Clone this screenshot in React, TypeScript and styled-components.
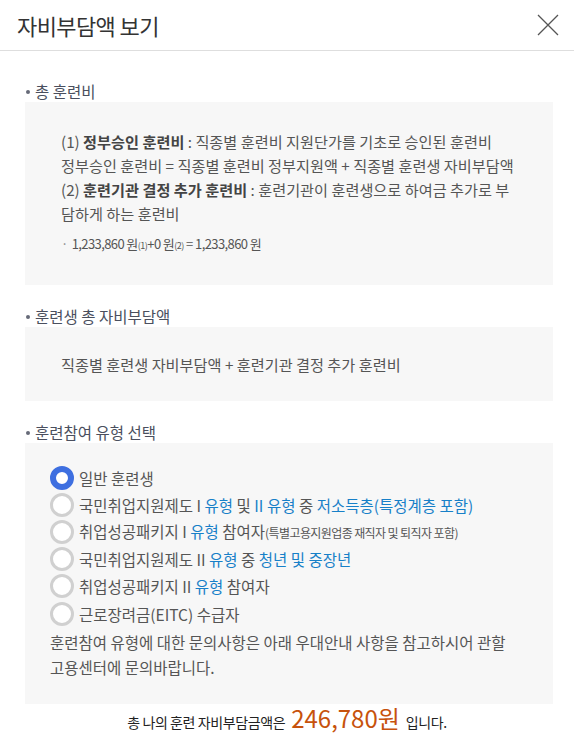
import React, { useState } from "react";
import styled, { createGlobalStyle } from "styled-components";

const Global = createGlobalStyle`
  html, body { margin: 0; padding: 0; background: #fff; }
  body { font-family: "Noto Sans CJK KR", "Noto Sans", sans-serif; color: #444; }
  * { box-sizing: border-box; }
`;

const Modal = styled.div`
  width: 574px;
  background: #fff;
`;

const Header = styled.div`
  height: 51px;
  border-bottom: 1px solid #dedede;
  display: flex;
  align-items: center;
  justify-content: space-between;
  padding: 0 12px 0 17px;
`;

const Title = styled.h1`
  margin: 0;
  font-size: 22px;
  font-weight: 400;
  color: #333;
  letter-spacing: -0.6px;
`;

const Close = styled.button`
  width: 28px;
  height: 28px;
  border: 0;
  background: none;
  padding: 0;
  display: flex;
  align-items: center;
  justify-content: center;
  cursor: pointer;
`;

const Body = styled.div`
  padding: 30px 21px 0 25px;
`;

const SectionTitle = styled.h2`
  margin: 0;
  font-size: 15.5px;
  font-weight: 400;
  line-height: 21px;
  color: #4a4f5e;
  display: flex;
  align-items: center;
  gap: 5px;
  &::before {
    content: "";
    width: 4px;
    height: 4px;
    border-radius: 50%;
    background: #666a78;
    margin-left: 1px;
  }
`;

const Section = styled.section<{ $gap?: number }>`
  margin-top: ${(p) => p.$gap ?? 0}px;
`;

const Box = styled.div<{ $pt: number; $pb: number }>`
  background: #f7f7f7;
  padding: ${(p) => p.$pt}px 30px ${(p) => p.$pb}px 36px;
  font-size: 15.2px;
  line-height: 24px;
  color: #555;
`;

const Line = styled.p`
  margin: 0;
`;

const Strong = styled.b`
  font-weight: 700;
  color: #444;
`;

const Sum = styled.p`
  margin: 7px 0 0;
  font-size: 13px;
  line-height: 24px;
  color: #555;
  letter-spacing: -0.6px;
  &::before {
    content: "·";
    margin-right: 4px;
    color: #888;
  }
`;

const Sub = styled.span`
  font-size: 9px;
  letter-spacing: -0.5px;
`;

const RadioList = styled.div`
  display: flex;
  flex-direction: column;
  margin-left: -11px;
`;

const RadioRow = styled.label`
  display: flex;
  align-items: center;
  gap: 5px;
  height: 27.2px;
  cursor: pointer;
  color: #555;
  font-size: 15.5px;
`;

const RadioCircle = styled.span<{ $on: boolean }>`
  width: 24px;
  height: 24px;
  border-radius: 50%;
  flex: none;
  background: #fff;
  border: ${(p) => (p.$on ? "6px solid #3e6fe0" : "3px solid #d0d0d0")};
`;

const Blue = styled.span`
  color: #1780c8;
`;

const Small = styled.span`
  font-size: 12px;
  letter-spacing: -0.6px;
`;

const Notice = styled.p`
  margin: 3px 0 0 -11px;
  font-size: 15.5px;
  line-height: 25px;
  color: #555;
`;

const Footer = styled.div`
  display: flex;
  justify-content: center;
  align-items: baseline;
  gap: 6px;
  padding: 0 0 20px;
  font-size: 14px;
  line-height: 28px;
  color: #222;
  letter-spacing: -0.4px;
`;

const Amount = styled.span`
  font-size: 24px;
  color: #c7520c;
  letter-spacing: 0;
`;

const options: React.ReactNode[] = [
  <>일반 훈련생</>,
  <>
    국민취업지원제도 I <Blue>유형</Blue> 및 <Blue>II 유형</Blue> 중 <Blue>저소득층(특정계층 포함)</Blue>
  </>,
  <>
    취업성공패키지 I <Blue>유형</Blue> 참여자<Small>(특별고용지원업종 재직자 및 퇴직자 포함)</Small>
  </>,
  <>
    국민취업지원제도 II <Blue>유형</Blue> 중 <Blue>청년 및 중장년</Blue>
  </>,
  <>
    취업성공패키지 II <Blue>유형</Blue> 참여자
  </>,
  <>근로장려금(EITC) 수급자</>,
];

export default function App() {
  const [sel, setSel] = useState(0);
  return (
    <>
      <Global />
      <Modal>
        <Header>
          <Title>자비부담액 보기</Title>
          <Close aria-label="닫기">
            <svg width="22" height="22" viewBox="0 0 22 22">
              <path d="M1 1 L21 21 M21 1 L1 21" stroke="#555" strokeWidth="1.3" fill="none" />
            </svg>
          </Close>
        </Header>
        <Body>
          <Section>
            <SectionTitle>총 훈련비</SectionTitle>
            <Box $pt={27} $pb={27}>
              <Line>
                (1) <Strong>정부승인 훈련비</Strong> : 직종별 훈련비 지원단가를 기초로 승인된 훈련비
              </Line>
              <Line>정부승인 훈련비 = 직종별 훈련비 정부지원액 + 직종별 훈련생 자비부담액</Line>
              <Line>
                (2) <Strong>훈련기관 결정 추가 훈련비</Strong> : 훈련기관이 훈련생으로 하여금 추가로 부담하게 하는 훈련비
              </Line>
              <Sum>
                1,233,860 원<Sub>(1)</Sub>+0 원<Sub>(2)</Sub> = 1,233,860 원
              </Sum>
            </Box>
          </Section>
          <Section $gap={21}>
            <SectionTitle>훈련생 총 자비부담액</SectionTitle>
            <Box $pt={25} $pb={25}>
              <Line>직종별 훈련생 자비부담액 + 훈련기관 결정 추가 훈련비</Line>
            </Box>
          </Section>
          <Section $gap={21}>
            <SectionTitle>훈련참여 유형 선택</SectionTitle>
            <Box $pt={21} $pb={24}>
              <RadioList>
                {options.map((o, i) => (
                  <RadioRow key={i} onClick={() => setSel(i)}>
                    <RadioCircle $on={sel === i} />
                    <span>{o}</span>
                  </RadioRow>
                ))}
              </RadioList>
              <Notice>
                훈련참여 유형에 대한 문의사항은 아래 우대안내 사항을 참고하시어 관할 고용센터에 문의바랍니다.
              </Notice>
            </Box>
          </Section>
        </Body>
        <Footer>
          <span>총 나의 훈련 자비부담금액은</span>
          <Amount>246,780원</Amount>
          <span>입니다.</span>
        </Footer>
      </Modal>
    </>
  );
}
